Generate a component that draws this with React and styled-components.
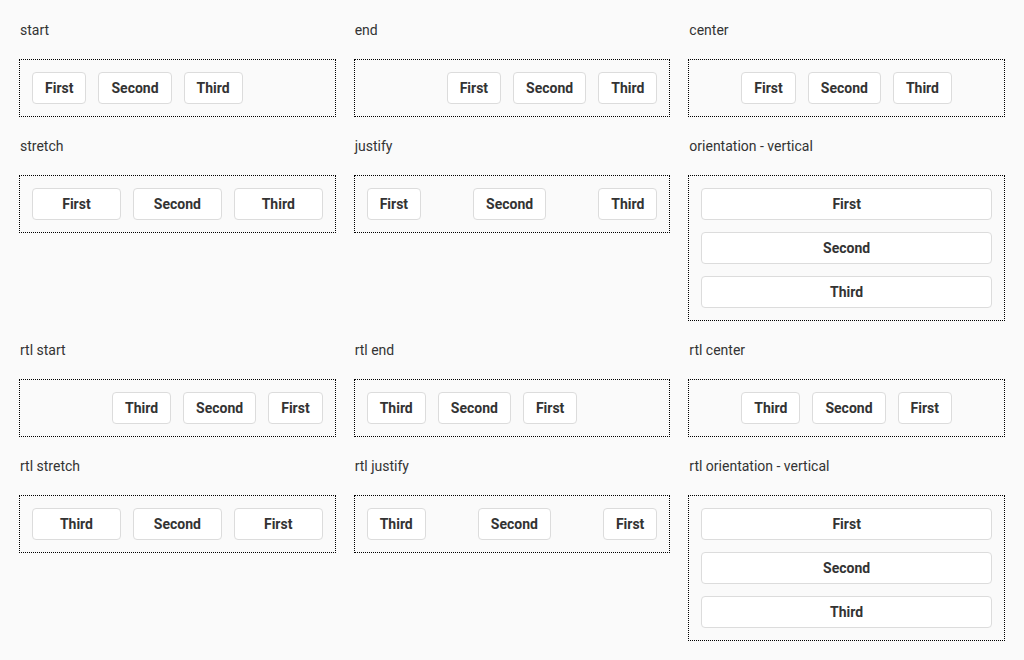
import styled, { createGlobalStyle } from "styled-components";

const GlobalStyle = createGlobalStyle`
  * { box-sizing: border-box; }
  html, body {
    margin: 0;
    background: #fafafa;
    font-family: Roboto, "Liberation Sans", sans-serif;
    color: #333;
  }
`;

const Page = styled.main`
  display: grid;
  grid-template-columns: repeat(3, 1fr);
  gap: 18px;
  padding: 19px;
  align-items: start;
`;

const Cell = styled.section`
  display: flex;
  flex-direction: column;
`;

const Label = styled.div`
  font-size: 14px;
  line-height: 22px;
  margin-bottom: 18px;
  padding-left: 1px;
  color: #333;
`;

const Group = styled.div`
  display: flex;
  flex-direction: ${({ vertical }) => (vertical ? "column" : "row")};
  justify-content: ${({ justify }) => justify};
  gap: 12px;
  padding: 12px;
  border: 1px dotted #000;
  direction: ${({ rtl }) => (rtl ? "rtl" : "ltr")};
`;

const Button = styled.button`
  height: 32px;
  padding: 0 12px;
  background: #fff;
  border: 1px solid #dcdcdc;
  border-radius: 4px;
  font-family: Roboto, "Liberation Sans", sans-serif;
  font-size: 14px;
  font-weight: 700;
  color: #333;
  cursor: pointer;
  flex: ${({ grow }) => (grow ? "1 1 0" : "0 0 auto")};
`;

const groups = [
  { label: "start", justify: "flex-start" },
  { label: "end", justify: "flex-end" },
  { label: "center", justify: "center" },
  { label: "stretch", justify: "flex-start", stretch: true },
  { label: "justify", justify: "space-between" },
  { label: "orientation - vertical", justify: "flex-start", vertical: true },
  { label: "rtl start", justify: "flex-start", rtl: true },
  { label: "rtl end", justify: "flex-end", rtl: true },
  { label: "rtl center", justify: "center", rtl: true },
  { label: "rtl stretch", justify: "flex-start", stretch: true, rtl: true },
  { label: "rtl justify", justify: "space-between", rtl: true },
  {
    label: "rtl orientation - vertical",
    justify: "flex-start",
    vertical: true,
    rtl: true,
  },
];

const items = ["First", "Second", "Third"];

export default function App() {
  return (
    <>
      <GlobalStyle />
      <Page>
        {groups.map(({ label, justify, stretch, vertical, rtl }) => (
          <Cell key={label}>
            <Label>{label}</Label>
            <Group justify={justify} vertical={vertical} rtl={rtl}>
              {items.map((item) => (
                <Button key={item} type="button" grow={stretch}>
                  {item}
                </Button>
              ))}
            </Group>
          </Cell>
        ))}
      </Page>
    </>
  );
}
